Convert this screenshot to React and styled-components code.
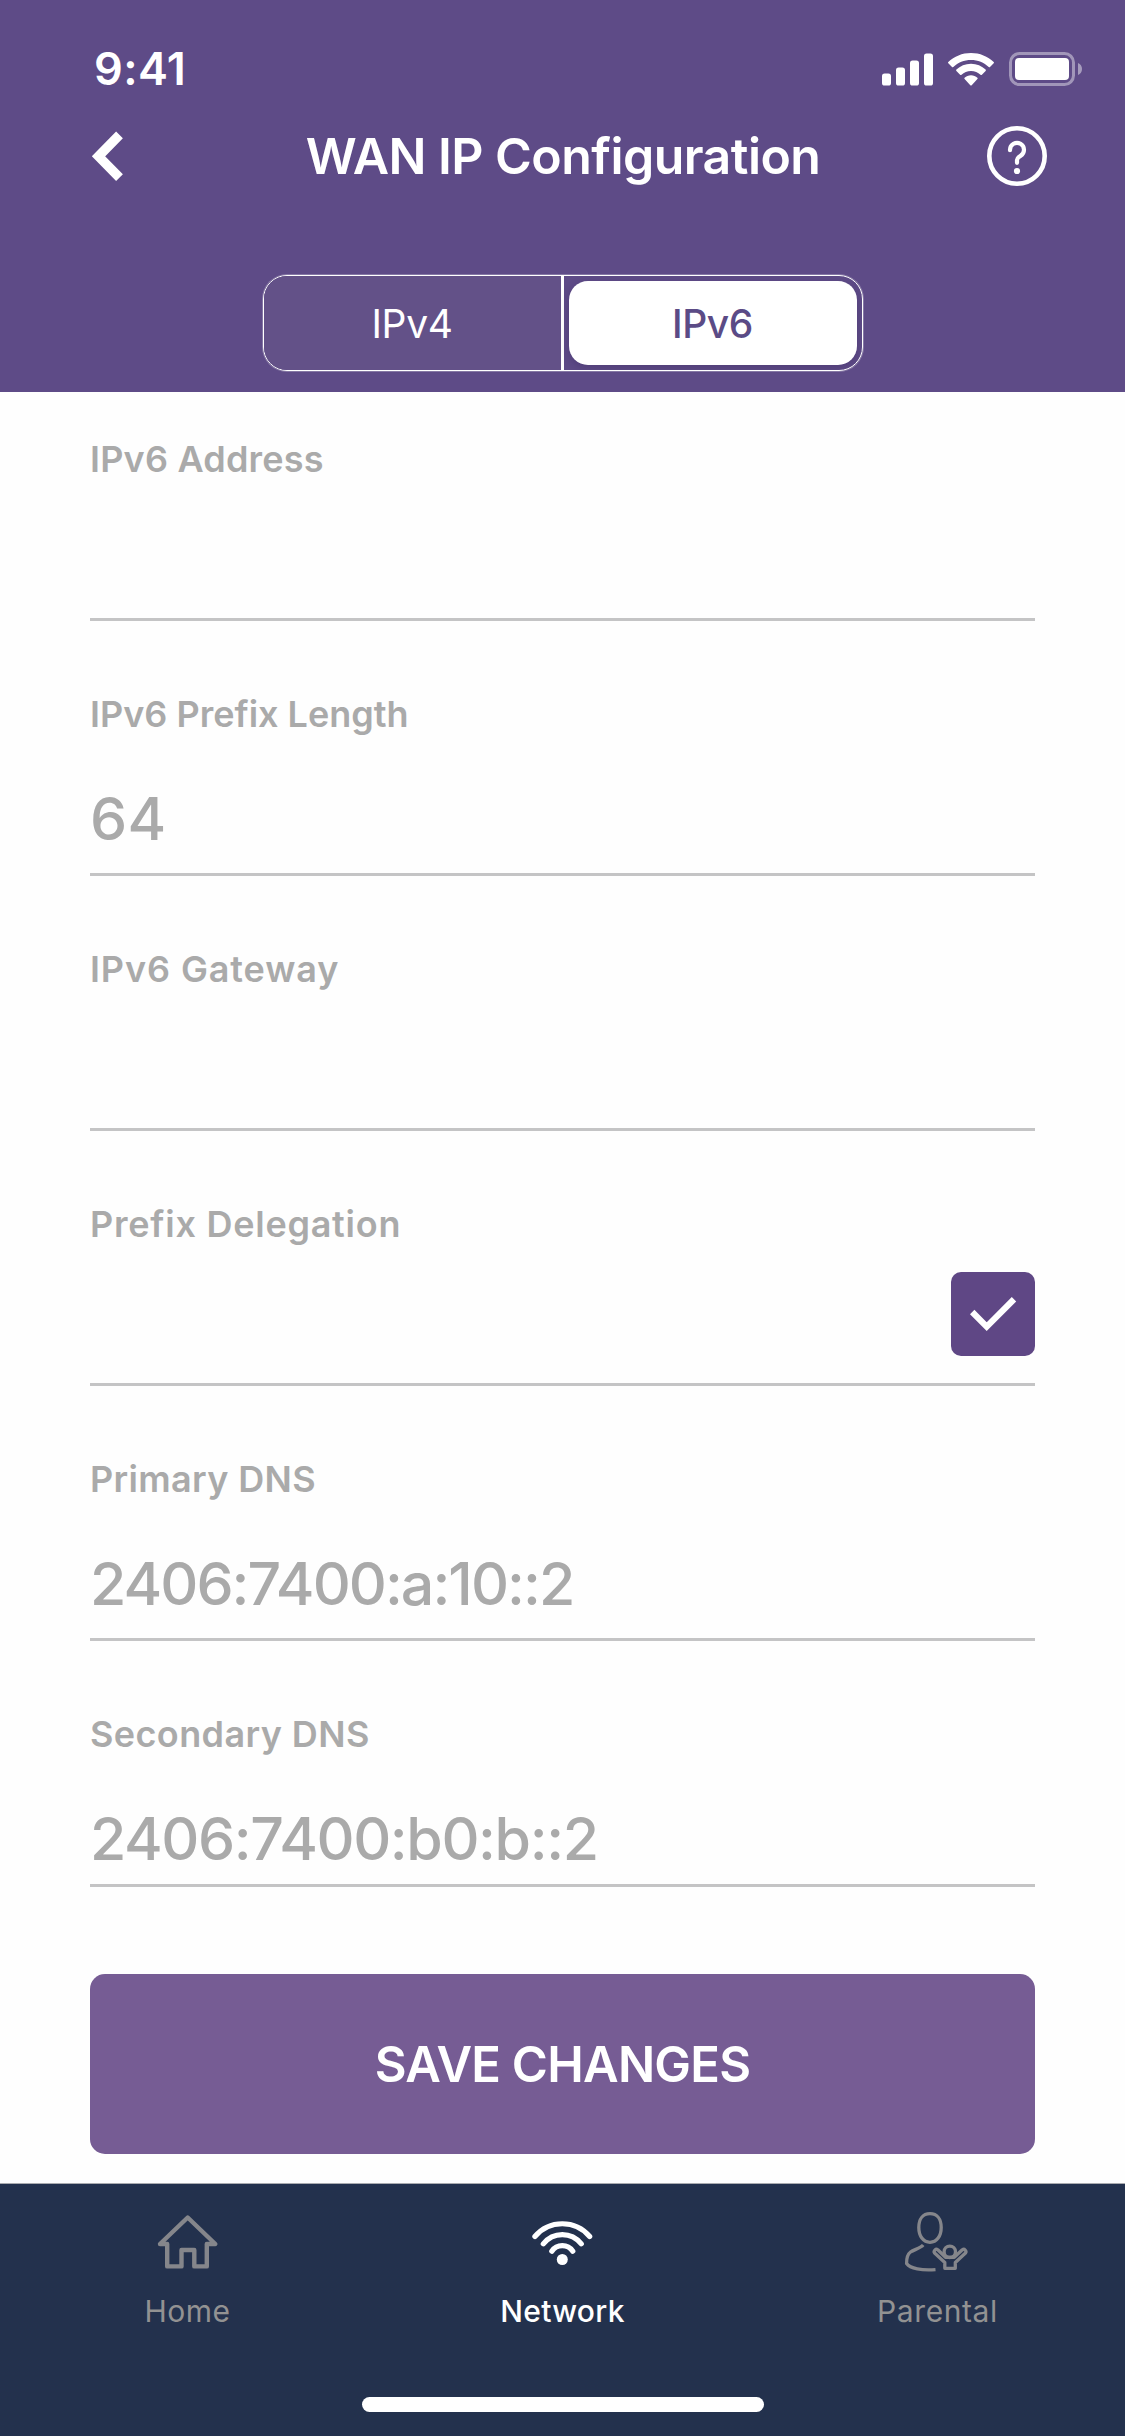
import React, { useState } from "react";
import styled, { createGlobalStyle } from "styled-components";

const GlobalStyle = createGlobalStyle`
  *, *::before, *::after { box-sizing: border-box; }
  html, body { margin: 0; padding: 0; background: #ffffff; }
  body { font-family: Inter, "Liberation Sans", sans-serif; -webkit-font-smoothing: antialiased; }
  button { font: inherit; border: 0; padding: 0; background: none; color: inherit; }
`;

const Screen = styled.div`
  display: flex;
  flex-direction: column;
  width: 1125px;
  height: 2436px;
  overflow: hidden;
  background: #fefefe;
`;

const Header = styled.header`
  display: flex;
  flex-direction: column;
  align-items: center;
  height: 392px;
  flex: none;
  background: #5e4b87;
  color: #ffffff;
`;

const StatusBar = styled.div`
  display: flex;
  align-items: center;
  justify-content: space-between;
  width: 100%;
  height: 98px;
  padding: 40px 42px 0 94px;
`;

const Clock = styled.span`
  font-size: 45px;
  font-weight: 600;
  line-height: 58px;
  letter-spacing: 0.4px;
`;

const StatusIcons = styled.div`
  display: flex;
  align-items: center;
  gap: 15px;
`;

const NavBar = styled.div`
  display: grid;
  grid-template-columns: 60px 1fr 60px;
  align-items: center;
  width: 100%;
  height: 116px;
  padding: 0 78px 0 79px;
`;

const IconButton = styled.button`
  display: flex;
  justify-content: ${(p) => p.$align};
`;

const Title = styled.h1`
  margin: 0;
  text-align: center;
  font-size: 50px;
  font-weight: 600;
  line-height: 60px;
  letter-spacing: -0.55px;
  white-space: nowrap;
`;

const Segments = styled.div`
  display: grid;
  grid-template-columns: 297px 3px 1fr;
  width: 600px;
  height: 96px;
  margin-top: 61px;
  border: 1px solid #ffffff;
  border-radius: 24px;
  box-shadow: 0 0 0 1px rgba(255, 255, 255, 0.25);
  overflow: hidden;
`;

const Divider = styled.span`
  background: #ffffff;
`;

const SegmentCell = styled.div`
  display: flex;
  padding: ${(p) => (p.$active ? "5px" : "0")};
  background: ${(p) => (p.$active ? "transparent" : "#635188")};
`;

const Segment = styled.button`
  flex: 1;
  border-radius: ${(p) => (p.$active ? "19px" : "0")};
  background: ${(p) => (p.$active ? "#ffffff" : "transparent")};
  color: ${(p) => (p.$active ? "#5b4b86" : "#ffffff")};
  box-shadow: ${(p) => (p.$active ? "0 3px 8px rgba(40, 25, 75, 0.25)" : "none")};
  font-size: 39px;
  font-weight: ${(p) => (p.$active ? 500 : 400)};
  letter-spacing: -0.4px;
`;

const Form = styled.main`
  display: flex;
  flex-direction: column;
  flex: none;
  height: 1791px;
  padding: 0 90px;
`;

const Field = styled.div`
  display: flex;
  flex-direction: column;
  height: ${(p) => p.$height}px;
  padding-top: ${(p) => p.$top}px;
  border-bottom: 3px solid #c4c4c5;
`;

const Label = styled.label`
  font-size: 36px;
  font-weight: 600;
  line-height: 44px;
  letter-spacing: ${(p) => p.$spacing}px;
  color: #aaaaaa;
  white-space: nowrap;
`;

const Value = styled.div`
  margin-top: 47px;
  font-size: 59px;
  font-weight: 500;
  line-height: 72px;
  letter-spacing: ${(p) => p.$spacing}px;
  color: #aaaaaa;
  white-space: nowrap;
`;

const CheckButton = styled.button`
  display: flex;
  align-self: flex-end;
  width: 84px;
  height: 84px;
  margin-top: 26px;
  border-radius: 10px;
  background: #5f4785;
`;

const SaveButton = styled.button`
  flex: none;
  height: 180px;
  margin-top: 87px;
  border-radius: 15px;
  background: #765c94;
  color: #ffffff;
  font-size: 49px;
  font-weight: 600;
  letter-spacing: -0.75px;
`;

const TabBar = styled.nav`
  display: grid;
  grid-template-columns: repeat(3, 1fr);
  grid-template-rows: 1fr 39px;
  flex: 1;
  border-top: 1px solid #a9abb0;
  background: #23314d;
`;

const Tab = styled.button`
  display: flex;
  flex-direction: column;
  align-items: center;
  justify-content: flex-start;
  padding-top: 25px;
  color: ${(p) => (p.$active ? "#ffffff" : "#929292")};
`;

const TabLabel = styled.span`
  margin-top: 19px;
  font-size: 30px;
  font-weight: ${(p) => (p.$active ? 500 : 400)};
  line-height: 38px;
  letter-spacing: ${(p) => p.$spacing}px;
`;

const HomeIndicator = styled.span`
  grid-column: 1 / -1;
  justify-self: center;
  width: 402px;
  height: 15px;
  border-radius: 8px;
  background: #ffffff;
`;

function SignalIcon() {
  return (
    <svg width="51" height="33" viewBox="0 0 51 33" fill="#fff">
      <rect x="0" y="20.5" width="9" height="12" rx="2.6" />
      <rect x="14" y="14.5" width="9" height="18" rx="2.6" />
      <rect x="28" y="7.5" width="9" height="25" rx="2.6" />
      <rect x="42" y="0.5" width="9" height="32" rx="2.6" />
    </svg>
  );
}

function WifiStatusIcon() {
  return (
    <svg width="46" height="33" viewBox="0 0 46 33" fill="#fff">
      <path d="M23 0C31.800 0 39.800 3.400 45.700 8.900Q46.300 9.500 45.700 10.200L42 13.900Q41.400 14.500 40.700 13.900C36 9.500 29.900 6.900 23 6.900S10 9.500 5.300 13.900Q4.600 14.500 4 13.900L0.300 10.200Q-0.300 9.500 0.300 8.900C6.200 3.400 14.200 0 23 0Z" />
      <path d="M23 10.800C28.700 10.800 33.800 13 37.600 16.600Q38.300 17.300 37.600 18L33.900 21.700Q33.200 22.300 32.500 21.700C30 19.400 26.700 18 23 18S16 19.400 13.500 21.700Q12.800 22.300 12.100 21.700L8.400 18Q7.700 17.300 8.400 16.600C12.200 13 17.300 10.800 23 10.800Z" />
      <path d="M23 22.300C25.500 22.300 27.700 23.200 29.400 24.700Q30.100 25.300 29.400 26L23.700 32.200Q23 32.800 22.300 32.200L16.600 26Q15.900 25.300 16.600 24.700C18.300 23.200 20.500 22.300 23 22.300Z" />
    </svg>
  );
}

function BatteryIcon() {
  return (
    <svg width="74" height="34" viewBox="0 0 74 34">
      <rect x="1.500" y="1.500" width="63" height="31" rx="9" fill="none" stroke="#fff" strokeOpacity="0.42" strokeWidth="3" />
      <rect x="6" y="6" width="54" height="22" rx="4" fill="#fff" />
      <path d="M69 11C71.500 12 73 14.300 73 17S71.500 22 69 23Z" fill="#fff" fillOpacity="0.45" />
    </svg>
  );
}

function BackIcon() {
  return (
    <svg width="48" height="60" viewBox="0 0 48 60" fill="none" stroke="#fff" strokeWidth="9.500">
      <path d="M40.500 8.900L19.500 30.300L40.500 51.700" />
    </svg>
  );
}

function HelpIcon() {
  return (
    <svg width="60" height="60" viewBox="0 0 60 60" fill="none" stroke="#fff" strokeLinecap="round">
      <circle cx="30" cy="30" r="27.700" strokeWidth="4.600" />
      <path d="M23 24.200V23.800A7 7 0 1 1 33.500 29.900C31.300 31.200 30 32 30 34V36.800" strokeWidth="4.200" />
      <circle cx="30" cy="45" r="3.100" fill="#fff" stroke="none" />
    </svg>
  );
}

function CheckIcon() {
  return (
    <svg width="84" height="84" viewBox="0 0 84 84" fill="none" stroke="#fff" strokeWidth="6.200">
      <path d="M21.200 40L35.700 54.600L63 27.200" />
    </svg>
  );
}

function HomeIcon() {
  return (
    <svg width="64" height="64" viewBox="0 0 64 64" fill="none" stroke="#85868b" strokeWidth="4.400" strokeLinejoin="round">
      <path d="M31.700 8.500L59.300 35H50.800V57.400H38.300V41H25.500V57.400H11.200V35H4Z" />
    </svg>
  );
}

function NetworkIcon() {
  return (
    <svg width="64" height="64" viewBox="0.700 0 64 64" fill="none" stroke="#fff" strokeWidth="5.200" strokeLinecap="round">
      <path d="M4.600 27.500C19 10.500 45 10.500 59.400 27.500" />
      <path d="M13 34.800C23 22.500 41 22.500 51 34.800" />
      <path d="M21.500 42.200C26.500 34.800 37.500 34.800 42.500 42.200" />
      <circle cx="32" cy="50.500" r="5.500" fill="#fff" stroke="none" />
    </svg>
  );
}

function ParentalIcon() {
  return (
    <svg width="68" height="64" viewBox="0 0 68 64" fill="none" stroke="#85868b" strokeWidth="3.300" strokeLinejoin="round">
      <path d="M26 4.700C33.200 4.700 37.200 10 37.200 18.500C37.200 27 32.800 33.300 26 33.300S14.800 27 14.800 18.500C14.800 10 18.800 4.700 26 4.700Z" />
      <path d="M19.200 36C16.500 39.300 10 40.500 6.500 43C3.200 45.500 2.500 49 2.600 54.500C6 59.500 18 61.800 31.500 60.600" />
      <circle cx="45.800" cy="42.800" r="5.700" />
      <path d="M41.500 48.300L33.800 40.800A2.300 2.300 0 0 0 30.600 44L40.800 53.500V59.300H51.300V53.500L61.500 44A2.300 2.300 0 0 0 58.300 40.800L50.300 48.300Z" />
    </svg>
  );
}

const fields = [
  { label: "IPv6 Address", spacing: 0.2 },
  { label: "IPv6 Prefix Length", spacing: 0, value: "64", valueSpacing: 0.3 },
  { label: "IPv6 Gateway", spacing: 0.9 },
  { label: "Prefix Delegation", spacing: 0.75, check: true },
  { label: "Primary DNS", spacing: 0.35, value: "2406:7400:a:10::2", valueSpacing: -1.95 },
  { label: "Secondary DNS", spacing: 0.4, value: "2406:7400:b0:b::2", valueSpacing: -1.4 },
];

const tabs = [
  { label: "Home", Icon: HomeIcon, spacing: 0.5 },
  { label: "Network", Icon: NetworkIcon, spacing: 0.3 },
  { label: "Parental", Icon: ParentalIcon, spacing: 0.6 },
];

export default function App() {
  const [version, setVersion] = useState("IPv6");
  const [delegated, setDelegated] = useState(true);

  return (
    <>
      <GlobalStyle />
      <Screen>
        <Header>
          <StatusBar>
            <Clock>9:41</Clock>
            <StatusIcons>
              <SignalIcon />
              <WifiStatusIcon />
              <BatteryIcon />
            </StatusIcons>
          </StatusBar>
          <NavBar>
            <IconButton $align="flex-start" aria-label="Back"><BackIcon /></IconButton>
            <Title>WAN IP Configuration</Title>
            <IconButton $align="flex-end" aria-label="Help"><HelpIcon /></IconButton>
          </NavBar>
          <Segments>
            <SegmentCell $active={version === "IPv4"}>
              <Segment $active={version === "IPv4"} onClick={() => setVersion("IPv4")}>IPv4</Segment>
            </SegmentCell>
            <Divider />
            <SegmentCell $active={version === "IPv6"}>
              <Segment $active={version === "IPv6"} onClick={() => setVersion("IPv6")}>IPv6</Segment>
            </SegmentCell>
          </Segments>
        </Header>
        <Form>
          {fields.map((f, i) => (
            <Field key={f.label} $height={i === 0 ? 229 : i === 5 ? 246 : 255} $top={i === 0 ? 45 : 71}>
              <Label $spacing={f.spacing}>{f.label}</Label>
              {f.value && <Value $spacing={f.valueSpacing}>{f.value}</Value>}
              {f.check && (
                <CheckButton role="checkbox" aria-checked={delegated} onClick={() => setDelegated(!delegated)}>
                  {delegated && <CheckIcon />}
                </CheckButton>
              )}
            </Field>
          ))}
          <SaveButton>SAVE CHANGES</SaveButton>
        </Form>
        <TabBar>
          {tabs.map(({ label, Icon, spacing }) => (
            <Tab key={label} $active={label === "Network"}>
              <Icon />
              <TabLabel $active={label === "Network"} $spacing={spacing}>{label}</TabLabel>
            </Tab>
          ))}
          <HomeIndicator />
        </TabBar>
      </Screen>
    </>
  );
}
